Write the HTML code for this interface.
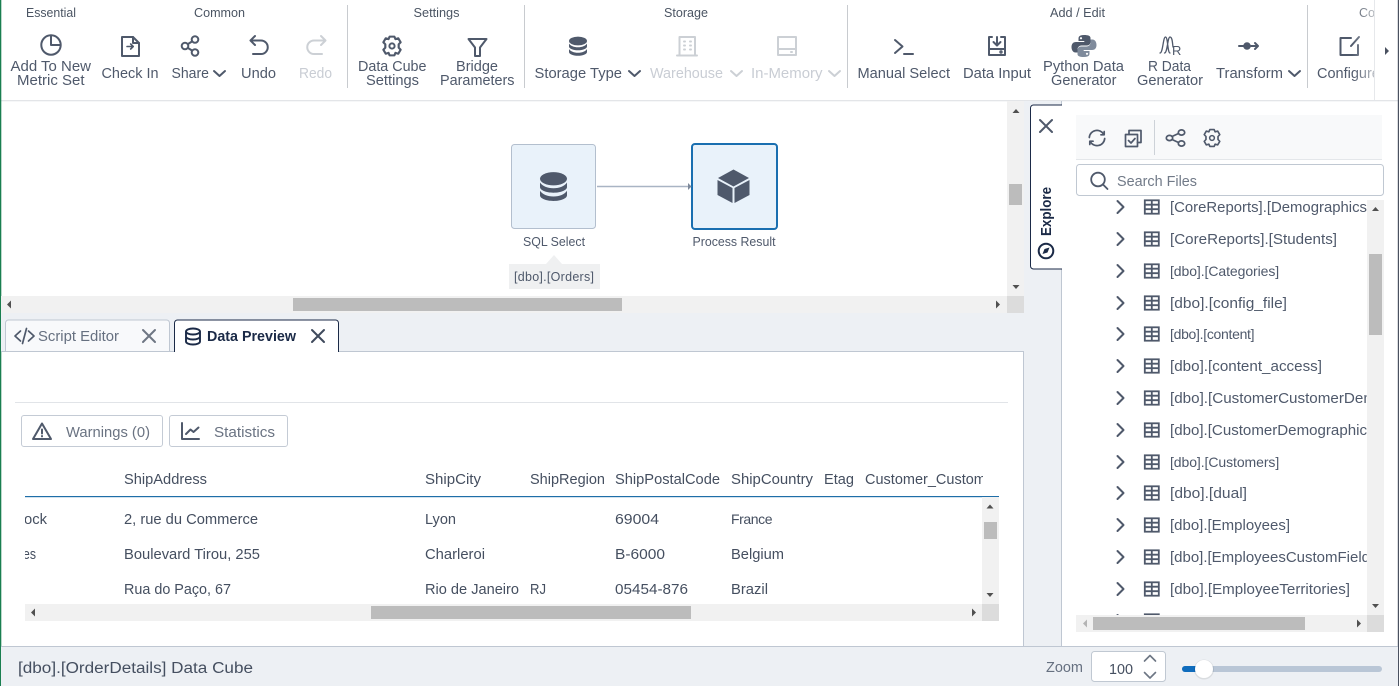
<!DOCTYPE html>
<html lang="en">
<head>
<meta charset="utf-8">
<title>Data Cube</title>
<style>
html,body{margin:0;padding:0;width:1399px;height:686px;overflow:hidden;background:#fff}
svg{display:block}
text{font-family:"Liberation Sans",sans-serif;font-size:14.5px;fill:#4f596b}
.g{font-size:12.5px;fill:#4b5563}
.d{fill:#c9cdd4}
.t{fill:#454f60}
.n{font-size:12.5px}
.s{font-size:14px}
.ic{fill:none;stroke:#4f596b;stroke-width:2;stroke-linecap:round;stroke-linejoin:round}
.dis{fill:none;stroke:#ccd0d5;stroke-width:2;stroke-linecap:round;stroke-linejoin:round}
</style>
</head>
<body>
<svg width="1399" height="686" viewBox="0 0 1399 686" xmlns="http://www.w3.org/2000/svg">
<defs>
<path id="chev" d="M0 0l5.500 5 5.500-5"/>
<g id="gear"><path transform="scale(1.080 1.040)" d="M-2.200-9H2.200L3.200-6.600 5.800-7.400 8-3.600 6.200-1.600V1.600L8 3.600 5.800 7.400 3.200 6.600 2.200 9H-2.200L-3.200 6.600-5.800 7.400-8 3.600-6.200 1.600V-1.600L-8-3.600-5.800-7.400-3.200-6.600Z"/><circle r="2.600"/></g>
<g id="db"><ellipse cy="-5.500" rx="9" ry="4.400"/><path d="M-9-3v3c0 2.100 4 3.800 9 3.800s9-1.700 9-3.800v-3c-1.500 2.400-5 3.800-9 3.800s-7.500-1.400-9-3.800z"/><path d="M-9 2.500v3c0 2.100 4 3.800 9 3.800s9-1.700 9-3.800v-3c-1.500 2.400-5 3.800-9 3.800s-7.500-1.400-9-3.800z"/></g>
<g id="row"><path d="M1117.500 -6l6 6-6 6" fill="none" stroke="#4f596b" stroke-width="2" stroke-linecap="round" stroke-linejoin="round"/><g fill="none" stroke="#4f596b" stroke-width="1.800"><rect x="1144.800" y="-6.700" width="14" height="13.400"/><path d="M1144.800-2.300h14M1144.800 2.200h14M1151.800-6.700V6.700"/></g></g>
<path id="x" d="M-6-6L6 6M6-6L-6 6"/>
<clipPath id="c-tree"><rect x="1076" y="197" width="291" height="418"/></clipPath>
<clipPath id="c-table"><rect x="25" y="465" width="957" height="139"/></clipPath>
<clipPath id="c-head"><rect x="25" y="465" width="958" height="30"/></clipPath>
<clipPath id="c-tool"><rect x="1310" y="0" width="64" height="100"/></clipPath>
<linearGradient id="fade" x1="0" x2="1" y1="0" y2="0"><stop offset="0" stop-color="#fff" stop-opacity="0"/><stop offset="1" stop-color="#fff" stop-opacity=".6"/></linearGradient>
</defs>

<rect width="1399" height="686" fill="#fff"/>

<!-- toolbar text -->
<text class="g" x="26" y="17" textLength="50" lengthAdjust="spacingAndGlyphs">Essential</text>
<text class="g" x="194" y="17" textLength="51" lengthAdjust="spacingAndGlyphs">Common</text>
<text class="g" x="413.500" y="17" textLength="46" lengthAdjust="spacingAndGlyphs">Settings</text>
<text class="g" x="664" y="17" textLength="44" lengthAdjust="spacingAndGlyphs">Storage</text>
<text class="g" x="1050" y="17" textLength="55" lengthAdjust="spacingAndGlyphs">Add / Edit</text>

<text x="10.500" y="71" textLength="80.500" lengthAdjust="spacingAndGlyphs">Add To New</text>
<text x="17" y="85" textLength="67.500" lengthAdjust="spacingAndGlyphs">Metric Set</text>
<text x="101.500" y="78" textLength="57" lengthAdjust="spacingAndGlyphs">Check In</text>
<text x="171.500" y="78" textLength="37.500" lengthAdjust="spacingAndGlyphs">Share</text>
<text x="241" y="78" textLength="35" lengthAdjust="spacingAndGlyphs">Undo</text>
<text class="d" x="299" y="78" textLength="33" lengthAdjust="spacingAndGlyphs">Redo</text>
<text x="358" y="71" textLength="68.500" lengthAdjust="spacingAndGlyphs">Data Cube</text>
<text x="366" y="85" textLength="53" lengthAdjust="spacingAndGlyphs">Settings</text>
<text x="456" y="71" textLength="42" lengthAdjust="spacingAndGlyphs">Bridge</text>
<text x="440" y="85" textLength="74.500" lengthAdjust="spacingAndGlyphs">Parameters</text>
<text x="534.500" y="78" textLength="87.500" lengthAdjust="spacingAndGlyphs">Storage Type</text>
<text class="d" x="650" y="78" textLength="73" lengthAdjust="spacingAndGlyphs">Warehouse</text>
<text class="d" x="751" y="78" textLength="71.500" lengthAdjust="spacingAndGlyphs">In-Memory</text>
<text x="857.500" y="78" textLength="92.500" lengthAdjust="spacingAndGlyphs">Manual Select</text>
<text x="963" y="78" textLength="68" lengthAdjust="spacingAndGlyphs">Data Input</text>
<text x="1043" y="71" textLength="81" lengthAdjust="spacingAndGlyphs">Python Data</text>
<text x="1051" y="85" textLength="65.500" lengthAdjust="spacingAndGlyphs">Generator</text>
<text x="1148" y="71" textLength="43" lengthAdjust="spacingAndGlyphs">R Data</text>
<text x="1137" y="85" textLength="66" lengthAdjust="spacingAndGlyphs">Generator</text>
<text x="1216" y="78" textLength="67" lengthAdjust="spacingAndGlyphs">Transform</text>
<g clip-path="url(#c-tool)">
<text class="g" x="1359" y="17">Config</text>
<text x="1317" y="78">Configure</text>
</g>

<!-- separators -->
<g fill="#c8cbcf"><rect x="347" y="5" width="1" height="83"/><rect x="524" y="5" width="1" height="83"/><rect x="847" y="5" width="1" height="83"/><rect x="1307" y="5" width="1" height="83"/></g>

<!-- toolbar icons -->
<g class="ic">
<circle cx="51" cy="45" r="9.700"/><path d="M51 35.500V45h9.500"/>
<path d="M122 37h11l6 6v13h-17z"/><path d="M133 37v6h6"/><path d="M127 46.500h6m-2.300-2.500l2.500 2.500-2.500 2.500" stroke-width="1.600"/>
<circle cx="185" cy="46" r="3.300"/><circle cx="195" cy="39.500" r="3.300"/><circle cx="195" cy="52.500" r="3.300"/><path d="M188 44l4-2.500M188 48l4 2.500"/>
<path d="M255 36l-4.500 4.500 4.500 4.500"/><path d="M251 40.500h10a6.700 6.700 0 0 1 0 13.500h-8"/>
<use href="#chev" x="214" y="71"/>
<use href="#gear" transform="translate(392 46)"/>
<path d="M468.500 39h18L480 47.500V56h-5v-8.500z"/>
<use href="#chev" x="629" y="71"/>
<path d="M895 40l7.500 6.500-7.500 6.500M904 54h9"/>
<path d="M992 37h-3v18h16V37h-4M997 37v8M993.500 42l3.500 3.500 3.500-3.500M989 49h16"/>
<circle cx="1001" cy="52" r=".7"/>
<use href="#chev" x="1289" y="71"/>
<path d="M1351 38h-10.500v17h17.500V45M1359 37l-8 9"/>
<path d="M1160 53c3 0 3-16 5.500-16s2 16 4.500 16M1164.500 53c3 0 3-16 5.500-16s2.500 7 3 10" stroke-width="1.300"/>
<path d="M1239 46h5M1251 46h7m-3-3l3 3-3 3"/>
</g>
<text x="1172" y="55" style="font-size:13px">R</text>
<circle cx="1247" cy="46" r="3.800" fill="#4f596b"/>
<use href="#db" transform="translate(578 46.500)" fill="#4f596b"/>
<g class="dis">
<path d="M321 36l4.500 4.500-4.500 4.500"/><path d="M325 40.500h-11a6.700 6.700 0 0 0 0 13.500h8"/>
<path d="M679.500 55V37h15.500v18M677 55.500h20"/>
<path d="M684 41.500h1M690 41.500h1M684 45.500h1M690 45.500h1M684 49.500h1M690 49.500h1"/>
<use href="#chev" x="731" y="71"/>
<rect x="778" y="37" width="18" height="18"/><path d="M778 49h18M791 52h1"/>
<use href="#chev" x="829" y="71"/>
</g>
<!-- python logo -->
<g>
<path d="M1084 35c-5 0-5.500 2-5.500 3.500V41h5.800v1h-8.300c-3 0-4.500 2-4.500 5s1.500 5.500 4 5.500h2v-3c0-2.500 2-4 4-4h5.500c2 0 3.500-1.500 3.500-3.500v-4c0-2-2-3-6.500-3z" fill="#4f596b"/>
<path d="M1084 57c5 0 5.500-2 5.500-3.500V51h-5.800v-1h8.300c3 0 4.500-2 4.500-5s-1.500-5.500-4-5.500h-2v3c0 2.500-2 4-4 4h-5.500c-2 0-3.500 1.500-3.500 3.500v4c0 2 2 3 6.500 3z" fill="#7f8b9c"/>
<circle cx="1081" cy="38.200" r="1.100" fill="#fff"/><circle cx="1087" cy="53.800" r="1.100" fill="#fff"/>
</g>

<!-- toolbar right scroll button -->
<rect x="1352" y="0" width="22" height="100" fill="url(#fade)"/>
<rect x="1374" y="0" width="23" height="100" fill="#fff"/>
<rect x="1374" y="0" width="1" height="100" fill="#e6e8eb"/>
<path d="M1385 47l4 4-4 4z" fill="#4a5160"/>
<rect x="1" y="100" width="1397" height="1.300" fill="#e3e5e8"/>

<!-- outer edges -->
<rect x="0" y="0" width="1.300" height="686" fill="#1a7f50"/>
<rect x="1397.800" y="0" width="1.200" height="686" fill="#4a5160"/>

<!-- canvas scrollbars -->
<rect x="1007" y="101" width="17" height="212" fill="#f1f1f1"/>
<rect x="1009" y="184" width="13" height="21" fill="#bcbcbc"/>
<path d="M1012.500 113l3.500-4 3.500 4z" fill="#505050"/><path d="M1012.500 285l3.500 4 3.500-4z" fill="#505050"/>
<rect x="1" y="296" width="1006" height="17" fill="#f1f1f1"/>
<rect x="293" y="298" width="329" height="13" fill="#bcbcbc"/>
<path d="M11 300.500l-4 4 4 4z" fill="#505050"/><path d="M996 300.500l4 4-4 4z" fill="#505050"/>
<rect x="1007" y="296" width="17" height="17" fill="#dcdcdc"/>

<!-- nodes -->
<rect x="511.500" y="144.500" width="84" height="84" rx="3" fill="#e9f2fa" stroke="#b3bfce"/>
<use href="#db" transform="translate(553.500 187) scale(1.500)" fill="#4f596b"/>
<rect x="692" y="144" width="85" height="85" rx="3" fill="#e9f2fa" stroke="#1a6fb0" stroke-width="2"/>
<path d="M597 186.500h93" stroke="#a9b4c4" stroke-width="1.600"/>
<path d="M688 183l3.500 3.500-3.500 3.500z" fill="#7d899a"/>
<path d="M733.500 169.500l15.500 8.500-15.500 8.500-15.500-8.500z" fill="#4f596b"/>
<path d="M717.500 180l15 8v15l-15-8z" fill="#4f596b"/>
<path d="M749.500 180l-15 8v15l15-8z" fill="#4f596b"/>
<text class="n" x="523" y="246" textLength="62" lengthAdjust="spacingAndGlyphs">SQL Select</text>
<text class="n" x="692.500" y="246" textLength="83" lengthAdjust="spacingAndGlyphs">Process Result</text>
<path d="M546 264l8-9 8 9z" fill="#eff0f1"/>
<rect x="509" y="264" width="91" height="25" fill="#eff0f1"/>
<text class="n" x="514" y="281" textLength="80">[dbo].[Orders]</text>

<!-- lower backgrounds -->
<rect x="1" y="313" width="1023" height="39" fill="#edf0f4"/>
<rect x="1024" y="101" width="37.500" height="545" fill="#edf0f4"/>
<rect x="1023" y="352" width="1" height="294" fill="#bfc7d2"/>
<rect x="1061" y="101" width="1" height="545" fill="#bfc7d2"/>

<!-- tabs -->
<path d="M5.500 352v-29a3 3 0 0 1 3-3h158a3 3 0 0 1 3 3v29" fill="#f8f9fb" stroke="#bfc7d2"/>
<rect x="1" y="351" width="1023" height="1" fill="#bfc7d2"/>
<path d="M174.500 352v-29a3 3 0 0 1 3-3h158a3 3 0 0 1 3 3v29" fill="#fff" stroke="#1b2a47"/>
<rect x="175" y="350" width="163" height="3" fill="#fff"/>
<path d="M20.500 331l-5.500 5 5.500 5M28.500 331l5.500 5-5.500 5M26.500 328.500l-4 15" class="ic" style="stroke-width:1.700"/>
<text x="38" y="341" textLength="81" lengthAdjust="spacingAndGlyphs" style="fill:#667080">Script Editor</text>
<use href="#x" transform="translate(149 336)" class="ic" style="stroke:#6e7683"/>
<g fill="none" stroke="#1b2a47" stroke-width="1.900">
<ellipse cx="193" cy="331.500" rx="7" ry="3"/><path d="M186 331.500v10c0 1.700 3 3 7 3s7-1.300 7-3v-10M186 336.500c0 1.700 3 3 7 3s7-1.300 7-3"/>
</g>
<text x="207" y="341" textLength="89" lengthAdjust="spacingAndGlyphs" style="fill:#1b2a47;font-weight:700">Data Preview</text>
<use href="#x" transform="translate(318 336)" class="ic" style="stroke:#3f4a5c"/>

<!-- preview panel -->
<rect x="15" y="402" width="993" height="1" fill="#e1e4e8"/>
<rect x="21.500" y="415.500" width="141" height="31" rx="2.500" fill="#fff" stroke="#c4cbd5"/>
<rect x="169.500" y="415.500" width="118" height="31" rx="2.500" fill="#fff" stroke="#c4cbd5"/>
<path d="M42 423.500l9 15.500H33z" class="ic"/>
<path d="M42 429.500v4M42 436v.4" class="ic"/>
<path d="M182 423v16h17M186 434l4.500-4.500 3 2.500 5-4.500" class="ic"/>
<text x="66" y="437" textLength="84" lengthAdjust="spacingAndGlyphs" style="fill:#6a7382">Warnings (0)</text>
<text x="214" y="437" textLength="61" lengthAdjust="spacingAndGlyphs" style="fill:#6a7382">Statistics</text>

<!-- table -->
<g clip-path="url(#c-head)">
<text class="t" x="124" y="484" textLength="83" lengthAdjust="spacingAndGlyphs">ShipAddress</text>
<text class="t" x="425" y="484" textLength="56" lengthAdjust="spacingAndGlyphs">ShipCity</text>
<text class="t" x="530" y="484" textLength="75" lengthAdjust="spacingAndGlyphs">ShipRegion</text>
<text class="t" x="615" y="484" textLength="105" lengthAdjust="spacingAndGlyphs">ShipPostalCode</text>
<text class="t" x="731" y="484" textLength="82" lengthAdjust="spacingAndGlyphs">ShipCountry</text>
<text class="t" x="824" y="484" textLength="30" lengthAdjust="spacingAndGlyphs">Etag</text>
<text class="t" x="865" y="484">Customer_CustomerID</text>
</g>
<rect x="25" y="496" width="974" height="1.200" fill="#1f6ea8"/>
<g clip-path="url(#c-table)">
<text class="t" x="24" y="524" textLength="23" lengthAdjust="spacingAndGlyphs">ock</text>
<text class="t" x="23" y="559" textLength="13" lengthAdjust="spacingAndGlyphs">es</text>
<text class="t" x="124" y="524" textLength="134" lengthAdjust="spacingAndGlyphs">2, rue du Commerce</text>
<text class="t" x="124" y="559" textLength="136" lengthAdjust="spacingAndGlyphs">Boulevard Tirou, 255</text>
<text class="t" x="124" y="594" textLength="107" lengthAdjust="spacingAndGlyphs">Rua do Paço, 67</text>
<text class="t" x="425" y="524" textLength="31" lengthAdjust="spacingAndGlyphs">Lyon</text>
<text class="t" x="425" y="559" textLength="60" lengthAdjust="spacingAndGlyphs">Charleroi</text>
<text class="t" x="425" y="594" textLength="94" lengthAdjust="spacingAndGlyphs">Rio de Janeiro</text>
<text class="t" x="530" y="594" textLength="16" lengthAdjust="spacingAndGlyphs">RJ</text>
<text class="t" x="615" y="524" textLength="44" lengthAdjust="spacingAndGlyphs">69004</text>
<text class="t" x="615" y="559" textLength="50" lengthAdjust="spacingAndGlyphs">B-6000</text>
<text class="t" x="615" y="594" textLength="73" lengthAdjust="spacingAndGlyphs">05454-876</text>
<text class="t s" x="731" y="524" style="letter-spacing:-.4px">France</text>
<text class="t" x="731" y="559" textLength="53" lengthAdjust="spacingAndGlyphs">Belgium</text>
<text class="t" x="731" y="594" textLength="37" lengthAdjust="spacingAndGlyphs">Brazil</text>
</g>
<rect x="982" y="497" width="17" height="107" fill="#f1f1f1"/>
<rect x="984" y="522" width="13" height="17" fill="#bcbcbc"/>
<path d="M986.500 508.500l3.500-4 3.500 4z" fill="#505050"/><path d="M986.500 593l3.500 4 3.500-4z" fill="#505050"/>
<rect x="25" y="604" width="957" height="17" fill="#f1f1f1"/>
<rect x="371" y="606" width="320" height="13" fill="#bcbcbc"/>
<path d="M35 608.500l-4 4 4 4z" fill="#505050"/><path d="M972 608.500l4 4-4 4z" fill="#505050"/>
<rect x="982" y="604" width="17" height="17" fill="#dcdcdc"/>

<!-- explore tab -->
<path d="M1062 105h-28.500a3 3 0 0 0-3 3v158a3 3 0 0 0 3 3H1062" fill="#fff" stroke="#1b2a47"/>
<use href="#x" transform="translate(1046 126)" class="ic"/>
<text transform="translate(1051 236) rotate(-90)" x="0" y="0" textLength="49" lengthAdjust="spacingAndGlyphs" style="fill:#1b2a47;font-weight:700">Explore</text>
<circle cx="1046" cy="251" r="7.300" fill="none" stroke="#1b2a47" stroke-width="2"/>
<path d="M1049.500 247.500l-2 5-5 1.500 2-5z" fill="#1b2a47"/>

<!-- right panel -->
<rect x="1076" y="115" width="306" height="44" fill="#f8f9fa"/>
<rect x="1076" y="159" width="306" height="1" fill="#e4e7ea"/>
<rect x="1154" y="120" width="1" height="35" fill="#cdd2d8"/>
<g class="ic" style="stroke-width:1.700">
<path d="M1103.800 134.500A7.700 7.700 0 0 0 1089.300 137.500M1090.200 141.500A7.700 7.700 0 0 0 1104.700 138.500"/>
<path d="M1104.200 131.500v3.300h-3.300M1089.800 144.500v-3.300h3.300"/>
<rect x="1125.500" y="134.500" width="12" height="12"/>
<path d="M1129 134.500V130.500h12v12h-3.500M1128.500 140.500l2.500 2.500 4-4.500"/>
<ellipse cx="1169.500" cy="138" rx="3.200" ry="2.600"/><ellipse cx="1181.500" cy="132.500" rx="3.200" ry="2.600"/><ellipse cx="1181.500" cy="143.500" rx="3.200" ry="2.600"/>
<path d="M1172 136.500l6.500-3M1172 139.500l6.500 3"/>
<use href="#gear" transform="translate(1212 138) scale(.9)"/>
</g>
<rect x="1076.500" y="164.500" width="307" height="31" rx="3" fill="#fff" stroke="#c0c8d2"/>
<circle cx="1098" cy="179.500" r="6.800" fill="none" stroke="#4f596b" stroke-width="1.800"/>
<path d="M1103 184.500l4.500 4.500" stroke="#4f596b" stroke-width="1.800" stroke-linecap="round"/>
<text x="1117" y="186" textLength="80" lengthAdjust="spacingAndGlyphs" style="fill:#717a88">Search Files</text>

<!-- tree -->
<g clip-path="url(#c-tree)">
<use href="#row" y="207"/><text x="1170" y="212" textLength="197" lengthAdjust="spacingAndGlyphs">[CoreReports].[Demographics</text>
<use href="#row" y="239"/><text x="1170" y="244" textLength="167" lengthAdjust="spacingAndGlyphs">[CoreReports].[Students]</text>
<use href="#row" y="271"/><text class="s" x="1170" y="276" style="letter-spacing:-.08px">[dbo].[Categories]</text>
<use href="#row" y="303"/><text x="1170" y="308" textLength="117" lengthAdjust="spacingAndGlyphs">[dbo].[config_file]</text>
<use href="#row" y="334"/><text class="s" x="1170" y="339" style="letter-spacing:-.3px">[dbo].[content]</text>
<use href="#row" y="366"/><text x="1170" y="371" textLength="152" lengthAdjust="spacingAndGlyphs">[dbo].[content_access]</text>
<use href="#row" y="398"/><text x="1170" y="403" textLength="206" lengthAdjust="spacingAndGlyphs">[dbo].[CustomerCustomerDem</text>
<use href="#row" y="430"/><text x="1170" y="435" textLength="197" lengthAdjust="spacingAndGlyphs">[dbo].[CustomerDemographic</text>
<use href="#row" y="462"/><text class="s" x="1170" y="467" style="letter-spacing:-.08px">[dbo].[Customers]</text>
<use href="#row" y="493"/><text x="1170" y="498" textLength="77" lengthAdjust="spacingAndGlyphs">[dbo].[dual]</text>
<use href="#row" y="525"/><text x="1170" y="530" textLength="120" lengthAdjust="spacingAndGlyphs">[dbo].[Employees]</text>
<use href="#row" y="557"/><text x="1170" y="562" textLength="200" lengthAdjust="spacingAndGlyphs">[dbo].[EmployeesCustomField</text>
<use href="#row" y="589"/><text x="1170" y="594" textLength="180" lengthAdjust="spacingAndGlyphs">[dbo].[EmployeeTerritories]</text>
<use href="#row" y="621"/>
</g>
<rect x="1367" y="200" width="17" height="415" fill="#f1f1f1"/>
<rect x="1369" y="254" width="13" height="81" fill="#bcbcbc"/>
<path d="M1372 211l3.500-4 3.500 4z" fill="#505050"/><path d="M1372 604l3.500 4 3.500-4z" fill="#505050"/>
<rect x="1076" y="615" width="291" height="17" fill="#f1f1f1"/>
<rect x="1093" y="617" width="212" height="13" fill="#bcbcbc"/>
<path d="M1087 619.500l-4 4 4 4z" fill="#b4b4b4"/><path d="M1357 619.500l4 4-4 4z" fill="#505050"/>
<rect x="1367" y="615" width="17" height="17" fill="#dcdcdc"/>

<!-- status bar -->
<rect x="1" y="646" width="1397" height="40" fill="#edf0f4"/>
<rect x="1" y="646" width="1397" height="1" fill="#bfc7d2"/>
<text x="18" y="673" style="font-size:15.500px" class="t" textLength="235" lengthAdjust="spacingAndGlyphs">[dbo].[OrderDetails] Data Cube</text>
<text x="1046" y="672" textLength="37" lengthAdjust="spacingAndGlyphs" style="fill:#667080">Zoom</text>
<rect x="1091.500" y="651.500" width="74" height="30" rx="3" fill="#fff" stroke="#c0c8d2"/>
<text class="t" x="1109" y="674" textLength="24" lengthAdjust="spacingAndGlyphs">100</text>
<path d="M1144.500 661l5.500-5.500 5.500 5.500M1144.500 672.500l5.500 5.500 5.500-5.500" fill="none" stroke="#6d7684" stroke-width="1.600" stroke-linecap="round" stroke-linejoin="round"/>
<rect x="1182" y="666" width="200" height="6" rx="3" fill="#b9c6d6"/>
<rect x="1182" y="666" width="20" height="6" rx="3" fill="#0f6cbd"/>
<circle cx="1204" cy="669.500" r="10" fill="#000" opacity=".08"/>
<circle cx="1204" cy="669" r="9" fill="#fff"/>
</svg>
</body>
</html>
